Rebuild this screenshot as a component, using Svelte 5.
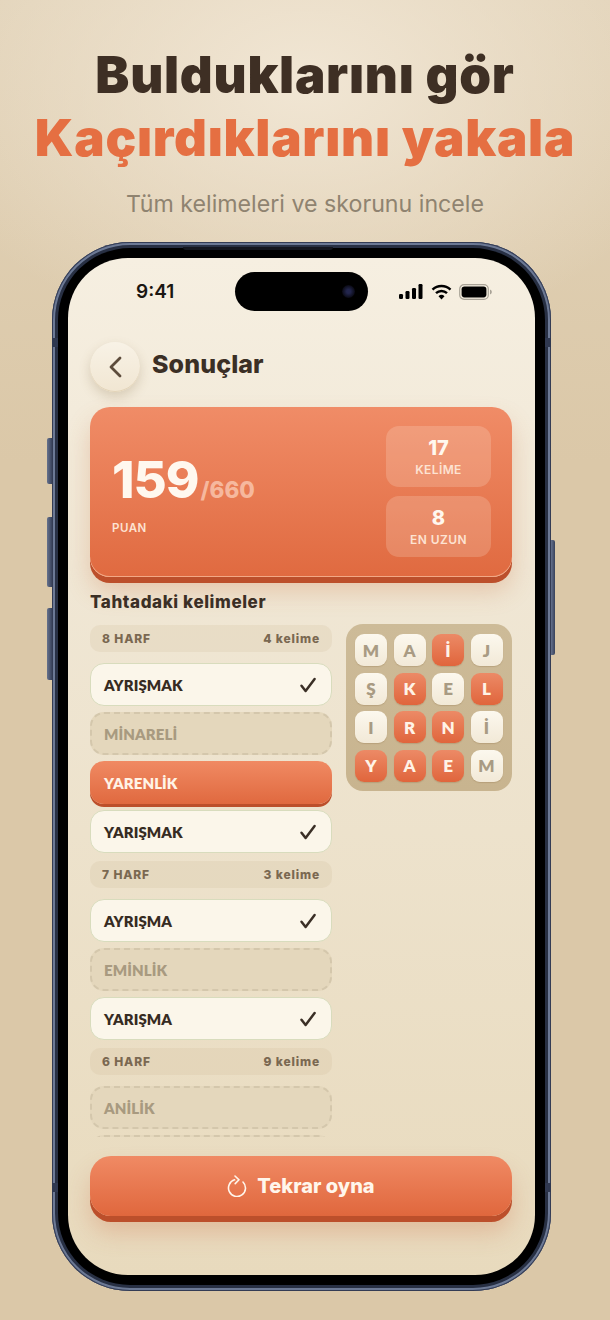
<script>
  const groups = [
    {
      label: "8 HARF",
      count: "4 kelime",
      words: [
        { text: "AYRIŞMAK", state: "found" },
        { text: "MİNARELİ", state: "missed" },
        { text: "YARENLİK", state: "active" },
        { text: "YARIŞMAK", state: "found" },
      ],
    },
    {
      label: "7 HARF",
      count: "3 kelime",
      words: [
        { text: "AYRIŞMA", state: "found" },
        { text: "EMİNLİK", state: "missed" },
        { text: "YARIŞMA", state: "found" },
      ],
    },
    {
      label: "6 HARF",
      count: "9 kelime",
      words: [
        { text: "ANİLİK", state: "missed" },
        { text: "", state: "missed" },
      ],
    },
  ];

  const board = [
    ["M", 0], ["A", 0], ["İ", 1], ["J", 0],
    ["Ş", 0], ["K", 1], ["E", 0], ["L", 1],
    ["I", 0], ["R", 1], ["N", 1], ["İ", 0],
    ["Y", 1], ["A", 1], ["E", 1], ["M", 0],
  ];
</script>

<div class="page">
  <header class="hero">
    <h1>Bulduklarını gör</h1>
    <h1 class="accent">Kaçırdıklarını yakala</h1>
    <p>Tüm kelimeleri ve skorunu incele</p>
  </header>

  <div class="phone">
    <span class="side l1"></span>
    <span class="side l2"></span>
    <span class="side l3"></span>
    <span class="side r1"></span>
    <span class="band b1"></span>
    <span class="band b2"></span>
    <span class="band b3"></span>
    <span class="band b4"></span>
    <span class="speaker"></span>

    <div class="bezel">
      <div class="screen">
        <div class="status">
          <span class="time">9:41</span>
          <div class="island"><span class="lens"></span></div>
          <div class="status-icons">
            <svg width="25" height="15" viewBox="0 0 25 15">
              <rect x="0" y="10" width="4" height="5" rx="1.2" fill="#000" />
              <rect x="6.5" y="7" width="4" height="8" rx="1.2" fill="#000" />
              <rect x="13" y="4" width="4" height="11" rx="1.2" fill="#000" />
              <rect x="19.5" y="0" width="4" height="15" rx="1.2" fill="#000" />
            </svg>
            <svg width="21" height="16" viewBox="0 0 21 16">
              <path d="M1.5 5.6a13 13 0 0 1 18 0" fill="none" stroke="#000" stroke-width="2.4" />
              <path d="M5 9.2a8 8 0 0 1 11 0" fill="none" stroke="#000" stroke-width="2.4" />
              <path d="M10.5 15.5l-3-3.2a4.3 4.3 0 0 1 6 0z" fill="#000" />
            </svg>
            <svg width="33" height="16" viewBox="0 0 33 16">
              <rect x="0.7" y="0.7" width="28.6" height="14.6" rx="4.4" fill="none" stroke="#a9a397" stroke-width="1.2" />
              <rect x="2.6" y="2.6" width="24.8" height="10.8" rx="2.8" fill="#000" />
              <path d="M31 5.5a2.6 2.6 0 0 1 0 5z" fill="#a9a397" />
            </svg>
          </div>
        </div>

        <div class="top">
          <button class="back" aria-label="Geri">
            <svg width="16" height="24" viewBox="0 0 16 24">
              <path d="M13 3 4 12l9 9" fill="none" stroke="#5d4c3c" stroke-width="2.8" stroke-linecap="round" stroke-linejoin="round" />
            </svg>
          </button>
          <h2>Sonuçlar</h2>
        </div>

        <section class="score">
          <div class="score-main">
            <div class="points"><strong>159</strong><span>/660</span></div>
            <div class="puan">PUAN</div>
          </div>
          <div class="stats">
            <div class="stat"><b>17</b><small>KELİME</small></div>
            <div class="stat"><b>8</b><small>EN UZUN</small></div>
          </div>
        </section>

        <h3>Tahtadaki kelimeler</h3>

        <div class="content">
          <div class="list">
            {#each groups as group}
              <div class="group-head">
                <span>{group.label}</span>
                <span>{group.count}</span>
              </div>
              <div class="words">
                {#each group.words as word}
                  <div class="word {word.state}">
                    <span>{word.text}</span>
                    {#if word.state === "found"}
                      <svg width="18" height="16" viewBox="0 0 18 16">
                        <path d="M2.5 8.8 6.6 14 15.6 2" fill="none" stroke="#3a2f26" stroke-width="2.5" stroke-linecap="round" stroke-linejoin="round" />
                      </svg>
                    {/if}
                  </div>
                {/each}
              </div>
            {/each}
          </div>

          <div class="board">
            {#each board as [letter, on]}
              <div class="cell" class:on={on === 1}>{letter}</div>
            {/each}
          </div>
        </div>

        <button class="replay">
          <svg width="20" height="22" viewBox="0 0 20 22">
            <path d="M7.6 4.85a8.5 8.5 0 1 0 8.4 2.15" fill="none" stroke="#fff6ec" stroke-width="1.6" stroke-linecap="round" />
            <path d="M8 1l4 3.8L8.2 8.6" fill="none" stroke="#fff6ec" stroke-width="1.6" stroke-linecap="round" stroke-linejoin="round" />
          </svg>
          Tekrar oyna
        </button>
      </div>
    </div>
  </div>
</div>

<style>
  :global(body) {
    margin: 0;
    background: #dbc8a8;
  }

  .page {
    width: 610px;
    height: 1320px;
    overflow: hidden;
    background:
      radial-gradient(ellipse 400px 270px at 50% 80px, #f1e6d4 0%, rgba(241, 230, 212, 0) 100%),
      linear-gradient(180deg, #e2d3b9 0%, #dbc8a8 35%, #dbc8a8 100%);
    font-family: "Inter", "Liberation Sans", sans-serif;
    color: #3a2d22;
  }

  .hero {
    height: 242px;
    padding-top: 43px;
    box-sizing: border-box;
    text-align: center;
  }

  h1 {
    margin: 0;
    font-size: 51px;
    line-height: 63px;
    font-weight: 900;
    letter-spacing: 0.75px;
    white-space: nowrap;
    color: #3e2f24;
  }

  h1.accent {
    color: #e56f42;
  }

  .hero p {
    margin: 20px 0 0;
    font-size: 23.2px;
    line-height: 30px;
    color: #8f8370;
  }

  .phone {
    position: relative;
    width: 499px;
    height: 1049px;
    margin-left: 52px;
    box-sizing: border-box;
    padding: 6px;
    border-radius: 78px;
    background: #283044;
    box-shadow: inset 0 0 0 1px #343c54, inset 0 0 0 3px #6c7995;
  }

  .side {
    position: absolute;
    width: 5px;
    background: linear-gradient(90deg, #66728d, #39425b);
  }

  .l1 { left: -5px; top: 196px; height: 46px; border-radius: 2px 0 0 2px; }
  .l2 { left: -5px; top: 275px; height: 70px; border-radius: 2px 0 0 2px; }
  .l3 { left: -5px; top: 366px; height: 72px; border-radius: 2px 0 0 2px; }
  .r1 { right: -4px; top: 298px; width: 4px; height: 115px; border-radius: 0 2px 2px 0; }

  .band {
    position: absolute;
    z-index: 2;
    width: 6px;
    height: 9px;
    background: #2f3850;
  }

  .b1 { left: 0; top: 96px; }
  .b2 { right: 0; top: 96px; }
  .b3 { left: 0; top: 941px; }
  .b4 { right: 0; top: 941px; }

  .speaker {
    position: absolute;
    z-index: 2;
    left: 131px;
    top: 5px;
    width: 150px;
    height: 3px;
    border-radius: 0 0 4px 4px;
    background: #14161f;
  }

  .bezel {
    height: 100%;
    box-sizing: border-box;
    padding: 10px;
    border-radius: 72px;
    background: #000;
  }

  .screen {
    display: flex;
    flex-direction: column;
    height: 100%;
    box-sizing: border-box;
    padding: 0 23px 0 22px;
    border-radius: 60px;
    overflow: hidden;
    background: linear-gradient(180deg, #f6efe1 0%, #f0e7d5 30%, #e8dabd 100%);
  }

  .status {
    display: grid;
    grid-template-columns: 1fr auto 1fr;
    align-items: center;
    height: 39px;
    margin: 14px -23px 31px -22px;
    flex: none;
  }

  .time {
    padding-left: 68px;
    font-size: 19px;
    font-weight: 600;
    color: #1b1712;
  }

  .island {
    position: relative;
    width: 133px;
    height: 39px;
    border-radius: 20px;
    background: #000;
  }

  .lens {
    position: absolute;
    right: 13px;
    top: 13px;
    width: 13px;
    height: 13px;
    border-radius: 50%;
    background: radial-gradient(circle, #23264d 20%, #0a0a14 70%);
  }

  .status-icons {
    display: flex;
    align-items: center;
    gap: 7px;
    padding-left: 31px;
  }

  .top {
    display: flex;
    align-items: center;
    gap: 13px;
    height: 50px;
    flex: none;
  }

  .back {
    display: flex;
    align-items: center;
    justify-content: center;
    width: 50px;
    height: 50px;
    padding: 0;
    border: none;
    border-radius: 50%;
    background: linear-gradient(180deg, #f8f2e6, #f1e6d2);
    box-shadow: 0 5px 12px rgba(120, 90, 50, 0.22), inset 0 -1px 0 #e2d3b8;
  }

  h2 {
    margin: -7px 0 0 -1px;
    font-size: 25px;
    font-weight: 800;
    letter-spacing: 0.1px;
    color: #3b2f25;
  }

  .score {
    display: flex;
    align-items: center;
    justify-content: space-between;
    flex: none;
    height: 170px;
    margin-top: 15px;
    padding: 0 21px 2px 22px;
    box-sizing: border-box;
    border-radius: 20px;
    background: linear-gradient(180deg, #f08c67 0%, #e06a40 100%);
    box-shadow: 0 6px 0 #bc4f2b, 0 14px 24px rgba(200, 110, 60, 0.28), inset 0 -1px 0 rgba(255, 210, 180, 0.6);
  }

  .score-main {
    padding-top: 2px;
    color: #fff8ef;
  }

  .points {
    display: flex;
    align-items: baseline;
    gap: 2px;
  }

  .points strong {
    font-size: 51px;
    line-height: 60px;
    font-weight: 800;
    letter-spacing: -1px;
  }

  .points span {
    font-size: 22.5px;
    font-weight: 800;
    color: #f6b89e;
  }

  .puan {
    margin-top: 11px;
    font-size: 11.5px;
    font-weight: 600;
    letter-spacing: 0.5px;
    color: #fde3d3;
  }

  .stats {
    display: flex;
    flex-direction: column;
    gap: 9px;
  }

  .stat {
    display: flex;
    flex-direction: column;
    align-items: center;
    justify-content: center;
    width: 105px;
    height: 61px;
    border-radius: 13px;
    background: rgba(255, 240, 225, 0.2);
    color: #fff8ef;
  }

  .stat b {
    font-size: 20px;
    line-height: 24px;
    font-weight: 800;
  }

  .stat small {
    margin-top: 2px;
    font-size: 12px;
    line-height: 15px;
    font-weight: 600;
    letter-spacing: 0.4px;
    color: #fde3d3;
  }

  h3 {
    flex: none;
    margin: 14px 0 0;
    font-size: 17px;
    line-height: 22px;
    font-weight: 800;
    letter-spacing: 0.6px;
    color: #3b2f25;
  }

  .content {
    display: flex;
    align-items: flex-start;
    gap: 14px;
    flex: none;
    height: 513px;
    margin-top: 11px;
    overflow: hidden;
  }

  .list {
    width: 242px;
    flex: none;
    display: flex;
    flex-direction: column;
  }

  .group-head {
    display: flex;
    justify-content: space-between;
    align-items: center;
    flex: none;
    height: 27px;
    margin: 1px 0 11px;
    padding: 0 12px;
    border-radius: 10px;
    background: rgba(205, 185, 150, 0.2);
    font-size: 12px;
    font-weight: 800;
    letter-spacing: 0.85px;
    color: #7a6851;
  }

  .words {
    display: flex;
    flex-direction: column;
    gap: 6px;
    margin-bottom: 7px;
  }

  .word {
    display: flex;
    align-items: center;
    justify-content: space-between;
    height: 43px;
    flex: none;
    box-sizing: border-box;
    padding: 0 14px 0 13px;
    border-radius: 14px;
    font-family: "Lato", "Liberation Sans", sans-serif;
    font-size: 15px;
    font-weight: 800;
    letter-spacing: 0.1px;
  }

  .word.found {
    background: #fbf6ea;
    border: 1.5px solid #d8dcbd;
    color: #362b22;
  }

  .word.missed {
    padding-left: 12px;
    background: #e4d7bc;
    border: 2px dashed #d4c7ac;
    color: #a89a80;
  }

  .word.active {
    padding-left: 14px;
    background: linear-gradient(180deg, #f08a63, #e0693f);
    box-shadow: 0 3px 0 #bc4f2b;
    color: #fff3e6;
  }

  .board {
    display: grid;
    grid-template-columns: repeat(4, 32px);
    grid-auto-rows: 32px;
    gap: 6.5px;
    width: 166px;
    box-sizing: border-box;
    padding: 10px 9px 9.5px;
    border-radius: 17px;
    background: linear-gradient(180deg, #cdbb98, #c8b48f);
  }

  .cell {
    display: flex;
    align-items: center;
    justify-content: center;
    border-radius: 9px;
    background: linear-gradient(180deg, #fcf8ee, #f2e9d7);
    box-shadow: 0 1px 1px rgba(130, 100, 60, 0.25);
    font-family: "Lato", "Liberation Sans", sans-serif;
    font-size: 17px;
    font-weight: 800;
    color: #a99b83;
  }

  .cell.on {
    background: linear-gradient(180deg, #ec8a66, #e0653c);
    color: #fff3e6;
  }

  .replay {
    display: flex;
    align-items: center;
    justify-content: center;
    gap: 10px;
    flex: none;
    height: 60px;
    margin-top: 19px;
    padding: 0;
    border: none;
    border-radius: 21px;
    background: linear-gradient(180deg, #f08a64 0%, #e0673d 100%);
    box-shadow: 0 6px 0 #bc4f2b, 0 16px 24px rgba(205, 110, 70, 0.3);
    font-family: "Inter", "Liberation Sans", sans-serif;
    font-size: 20px;
    font-weight: 800;
    letter-spacing: 0;
    color: #fff6ec;
  }
</style>
